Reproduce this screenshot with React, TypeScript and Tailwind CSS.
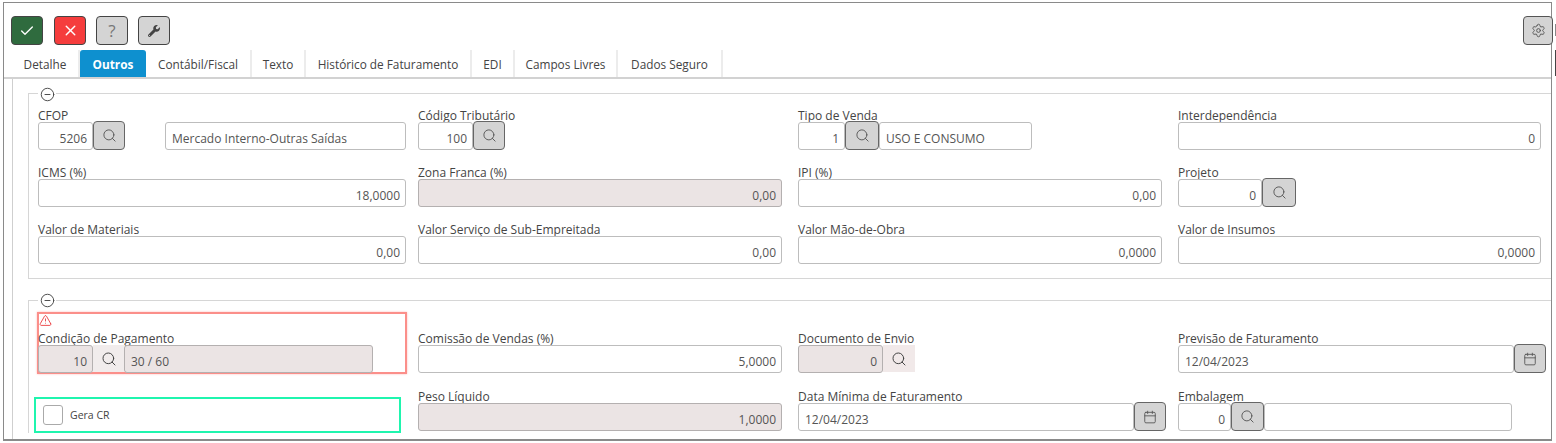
import React from 'react';
import { Check, X, Search, Calendar, Settings, CircleMinus, TriangleAlert } from 'lucide-react';
import { FaWrench } from 'react-icons/fa';

const tabs = [
  { label: 'Detalhe', width: 'w-[68px]' },
  { label: 'Outros', width: 'w-[66px]', active: true },
  { label: 'Contábil/Fiscal', width: 'w-[106px]' },
  { label: 'Texto', width: 'w-[54px]' },
  { label: 'Histórico de Faturamento', width: 'w-[166px]' },
  { label: 'EDI', width: 'w-[43px]' },
  { label: 'Campos Livres', width: 'w-[103px]' },
  { label: 'Dados Seguro', width: 'w-[105px]' },
];

const Label = ({ text }: { text: string }) => (
  <div className="h-[19px] text-[12px] leading-[25px] text-[#444] whitespace-nowrap">{text}</div>
);

interface InputProps {
  value?: string;
  width: string;
  disabled?: boolean;
  left?: boolean;
}

const Input = ({ value, width, disabled, left }: InputProps) => (
  <div
    className={`${width} h-[28px] shrink-0 rounded-[3px] border pl-[6px] pr-[5px] text-[12px] leading-[31px] text-[#555] ${
      left ? 'text-left' : 'text-right'
    } ${disabled ? 'bg-[#ebe4e4] border-[#b4b0b0]' : 'bg-white border-[#bdbdbd]'}`}
  >
    {value}
  </div>
);

const IconBtn = ({ icon, width = 'w-[32px]' }: { icon: 'search' | 'calendar'; width?: string }) => (
  <div
    className={`${width} h-[29px] -mt-[1px] shrink-0 flex items-center justify-center rounded-[4px] border border-[#666] bg-[#d4d4d4] text-[#555]`}
  >
    {icon === 'search' ? <Search size={15} strokeWidth={1.5} /> : <Calendar size={14} strokeWidth={1.5} />}
  </div>
);

const FlatSearch = ({ width, bg }: { width: string; bg: string }) => (
  <div className={`${width} ${bg} h-[27px] shrink-0 flex items-center justify-center text-[#444]`}>
    <Search size={16} strokeWidth={1.5} />
  </div>
);

const Field = ({ label, children }: { label: string; children: React.ReactNode }) => (
  <div>
    <Label text={label} />
    <div className="flex">{children}</div>
  </div>
);

const ToolButton = ({ className, children }: { className: string; children: React.ReactNode }) => (
  <div className={`${className} w-[32px] h-[29px] flex items-center justify-center rounded-[4px] border border-[#444]`}>
    {children}
  </div>
);

const Legend = ({ className }: { className: string }) => (
  <div className={`absolute left-[9px] w-[18px] flex justify-center bg-white text-[#444] ${className}`}>
    <CircleMinus size={15} strokeWidth={1.5} />
  </div>
);

export default function App() {
  return (
    <div className="w-[1556px] h-[443px] bg-white overflow-hidden relative font-['Open_Sans','Noto_Sans',sans-serif] pt-[2px] pl-[3px]">
      <div className="w-[1549px] h-[439px] border border-[#8a8a8a] border-b-2 overflow-hidden flex flex-col">
        {/* toolbar */}
        <div className="flex justify-between pt-[13px] pl-[7px] h-[47px] shrink-0">
          <div className="flex gap-[10px]">
            <ToolButton className="bg-[#2f6b3e] text-white mr-px">
              <Check size={16} strokeWidth={2} />
            </ToolButton>
            <ToolButton className="bg-[#f53d3d] text-white">
              <X size={17} strokeWidth={2} />
            </ToolButton>
            <ToolButton className="bg-[#d4d4d4] text-[#777] text-[17px]">?</ToolButton>
            <ToolButton className="bg-[#d4d4d4] text-[#444]">
              <FaWrench size={12} />
            </ToolButton>
          </div>
        </div>

        {/* tabs */}
        <div className="flex h-[29px] shrink-0 pl-[8px] border-b-2 border-[#d2d2d2]">
          {tabs.map((tab) => (
            <div
              key={tab.label}
              className={`${tab.width} h-[27px] shrink-0 text-center text-[11.8px] leading-[29px] whitespace-nowrap ${
                tab.active
                  ? 'bg-[#0e90cf] text-white font-bold rounded-t-[3px]'
                  : 'text-[#444] border-r-2 border-[#ececec]'
              }`}
            >
              {tab.label}
            </div>
          ))}
        </div>

        {/* panel */}
        <div className="ml-[8px] pl-[15px] pt-[14px] border-l border-[#cfcfcf] grow">
          <div className="relative border border-r-0 border-[#d6d6d6] pl-[9px] pb-[14px] pt-[9px]">
            <Legend className="-top-[7px]" />
            <div className="grid grid-cols-[380px_380px_380px_380px] gap-y-[10px]">
              <Field label="CFOP">
                <Input value="5206" width="w-[55px]" />
                <IconBtn icon="search" />
                <div className="w-[40px] shrink-0" />
                <Input value="Mercado Interno-Outras Saídas" width="w-[241px]" left />
              </Field>
              <Field label="Código Tributário">
                <Input value="100" width="w-[55px]" />
                <IconBtn icon="search" />
              </Field>
              <Field label="Tipo de Venda">
                <Input value="1" width="w-[47px]" />
                <IconBtn icon="search" width="w-[34px]" />
                <Input value="USO E CONSUMO" width="w-[153px]" left />
              </Field>
              <Field label="Interdependência">
                <Input value="0" width="w-[363px]" />
              </Field>

              <Field label="ICMS (%)">
                <Input value="18,0000" width="w-[368px]" />
              </Field>
              <Field label="Zona Franca (%)">
                <Input value="0,00" width="w-[364px]" disabled />
              </Field>
              <Field label="IPI (%)">
                <Input value="0,00" width="w-[364px]" />
              </Field>
              <Field label="Projeto">
                <Input value="0" width="w-[84px]" />
                <IconBtn icon="search" width="w-[34px]" />
              </Field>

              <Field label="Valor de Materiais">
                <Input value="0,00" width="w-[368px]" />
              </Field>
              <Field label="Valor Serviço de Sub-Empreitada">
                <Input value="0,00" width="w-[364px]" />
              </Field>
              <Field label="Valor Mão-de-Obra">
                <Input value="0,0000" width="w-[364px]" />
              </Field>
              <Field label="Valor de Insumos">
                <Input value="0,0000" width="w-[363px]" />
              </Field>
            </div>
          </div>

          <div className="relative mt-[21px] border-t border-l border-[#d6d6d6] pl-[9px] pt-[11px]">
            <Legend className="-top-[8px]" />
            <div className="grid grid-cols-[380px_380px_380px_380px] items-end">
              <div className="-ml-px w-[370px] h-[62px] border-2 border-[#fb8f8a] shadow-[0_0_2px_#fbb]">
                <div className="-ml-px">
                  <TriangleAlert size={13} strokeWidth={1.5} className="text-[#e8262a] ml-px" />
                  <div className="-mt-px">
                    <Label text="Condição de Pagamento" />
                  </div>
                  <div className="flex">
                    <Input value="10" width="w-[55px]" disabled />
                    <FlatSearch width="w-[31px]" bg="bg-[#f1ecec]" />
                    <Input value="30 / 60" width="w-[249px]" disabled left />
                  </div>
                </div>
              </div>
              <div className="pb-px">
                <Field label="Comissão de Vendas (%)">
                  <Input value="5,0000" width="w-[364px]" />
                </Field>
              </div>
              <div className="pb-px">
                <Field label="Documento de Envio">
                  <Input value="0" width="w-[85px]" disabled />
                  <FlatSearch width="w-[32px]" bg="bg-[#f1e9e9]" />
                </Field>
              </div>
              <div className="pb-px">
                <Field label="Previsão de Faturamento">
                  <Input value="12/04/2023" width="w-[336px]" left />
                  <IconBtn icon="calendar" />
                </Field>
              </div>
            </div>

            <div className="grid grid-cols-[380px_380px_380px_380px] mt-[10px]">
              <div className="-ml-[4px] mt-[13px] w-[367px] h-[36px] border-2 border-[#1ff5ae] flex items-center pl-[7px] gap-[7px]">
                <div className="w-[20px] h-[20px] rounded-[3px] border border-[#aaa] bg-white" />
                <span className="text-[10.5px] text-[#444] pt-px">Gera CR</span>
              </div>
              <Field label="Peso Líquido">
                <Input value="1,0000" width="w-[364px]" disabled />
              </Field>
              <Field label="Data Mínima de Faturamento">
                <Input value="12/04/2023" width="w-[336px]" left />
                <IconBtn icon="calendar" />
              </Field>
              <Field label="Embalagem">
                <Input value="0" width="w-[53px]" />
                <IconBtn icon="search" width="w-[33px]" />
                <Input width="w-[248px]" left />
              </Field>
            </div>
          </div>
        </div>
      </div>

      {/* settings button sits over the window edge */}
      <div className="absolute left-[1523px] top-[16px] w-[30px] h-[29px] flex items-center justify-center rounded-[4px] border border-[#555] bg-[#d4d4d4] text-[#555]">
        <Settings size={15} strokeWidth={1.5} />
      </div>
      <div className="absolute left-[1555px] top-[50px] w-px h-[26px] bg-[#444]" />
      <div className="absolute left-[1555px] top-[24px] w-px h-[12px] bg-[#888]" />
    </div>
  );
}
